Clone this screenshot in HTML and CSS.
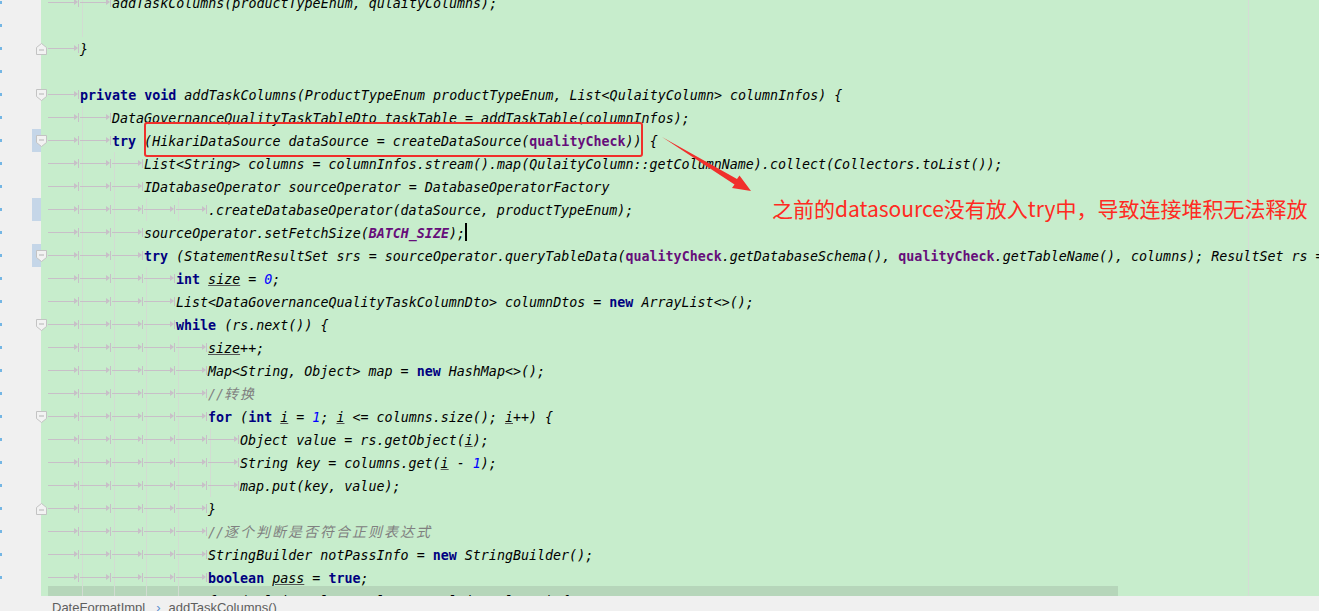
FILE: index.html
```html
<!DOCTYPE html>
<html lang="zh-CN">
<head>
    <meta charset="UTF-8">
    <title>DateFormatImpl - addTaskColumns()</title>
    <link rel="stylesheet" href="styles.css">
</head>
<body>

    <div class="editor">
        <div class="row gd"><span class="gut"></span><span class="code"><i class="t"></i><i class="t"></i>addTaskColumns(productTypeEnum, qulaityColumns);</span></div>
        <div class="row gd"><span class="gut"></span><span class="code"></span></div>
        <div class="row"><span class="gut"><svg class="fold" width="11" height="12" viewBox="0 0 11 12"><path d="M0.5 11.5H10.5V4.5L5.5 0.5L0.5 4.5Z"/><line x1="3" y1="7" x2="8" y2="7"/></svg></span><span class="code"><i class="t"></i>}</span></div>
        <div class="row"><span class="gut"></span><span class="code"></span></div>
        <div class="row"><span class="gut"><svg class="fold" width="11" height="12" viewBox="0 0 11 12"><path d="M0.5 0.5H10.5V7.5L5.5 11.5L0.5 7.5Z"/><line x1="3" y1="5" x2="8" y2="5"/></svg></span><span class="code"><i class="t"></i><b class="k">private</b> <b class="k">void</b> addTaskColumns(ProductTypeEnum productTypeEnum, List&lt;QulaityColumn&gt; columnInfos) {</span></div>
        <div class="row"><span class="gut"></span><span class="code"><i class="t"></i><i class="t"></i>DataGovernanceQualityTaskTableDto taskTable = addTaskTable(columnInfos);</span></div>
        <div class="row"><span class="gut"><span class="bm"></span><svg class="fold" width="11" height="12" viewBox="0 0 11 12"><path d="M0.5 0.5H10.5V7.5L5.5 11.5L0.5 7.5Z"/><line x1="3" y1="5" x2="8" y2="5"/></svg></span><span class="code"><i class="t"></i><i class="t"></i><b class="k">try</b> (HikariDataSource dataSource = createDataSource(<b class="f">qualityCheck</b>)) {</span></div>
        <div class="row"><span class="gut"></span><span class="code"><i class="t"></i><i class="t"></i><i class="t"></i>List&lt;String&gt; columns = columnInfos.stream().map(QulaityColumn::getColumnName).collect(Collectors.toList());</span></div>
        <div class="row"><span class="gut"></span><span class="code"><i class="t"></i><i class="t"></i><i class="t"></i>IDatabaseOperator sourceOperator = DatabaseOperatorFactory</span></div>
        <div class="row"><span class="gut"><span class="bm"></span></span><span class="code"><i class="t"></i><i class="t"></i><i class="t"></i><i class="t"></i><i class="t"></i>.createDatabaseOperator(dataSource, productTypeEnum);</span></div>
        <div class="row"><span class="gut"></span><span class="code"><i class="t"></i><i class="t"></i><i class="t"></i>sourceOperator.setFetchSize(<b class="c">BATCH_SIZE</b>);<span class="caret"></span></span></div>
        <div class="row"><span class="gut"><span class="bm"></span><svg class="fold" width="11" height="12" viewBox="0 0 11 12"><path d="M0.5 0.5H10.5V7.5L5.5 11.5L0.5 7.5Z"/><line x1="3" y1="5" x2="8" y2="5"/></svg></span><span class="code"><i class="t"></i><i class="t"></i><i class="t"></i><b class="k">try</b> (StatementResultSet srs = sourceOperator.queryTableData(<b class="f">qualityCheck</b>.getDatabaseSchema(), <b class="f">qualityCheck</b>.getTableName(), columns); ResultSet rs = srs.getResultSet()) {</span></div>
        <div class="row"><span class="gut"></span><span class="code"><i class="t"></i><i class="t"></i><i class="t"></i><i class="t"></i><b class="k">int</b> <u>size</u> = <span class="n">0</span>;</span></div>
        <div class="row"><span class="gut"></span><span class="code"><i class="t"></i><i class="t"></i><i class="t"></i><i class="t"></i>List&lt;DataGovernanceQualityTaskColumnDto&gt; columnDtos = <b class="k">new</b> ArrayList&lt;&gt;();</span></div>
        <div class="row"><span class="gut"><svg class="fold" width="11" height="12" viewBox="0 0 11 12"><path d="M0.5 0.5H10.5V7.5L5.5 11.5L0.5 7.5Z"/><line x1="3" y1="5" x2="8" y2="5"/></svg></span><span class="code"><i class="t"></i><i class="t"></i><i class="t"></i><i class="t"></i><b class="k">while</b> (rs.next()) {</span></div>
        <div class="row"><span class="gut"></span><span class="code"><i class="t"></i><i class="t"></i><i class="t"></i><i class="t"></i><i class="t"></i><u>size</u>++;</span></div>
        <div class="row"><span class="gut"></span><span class="code"><i class="t"></i><i class="t"></i><i class="t"></i><i class="t"></i><i class="t"></i>Map&lt;String, Object&gt; map = <b class="k">new</b> HashMap&lt;&gt;();</span></div>
        <div class="row"><span class="gut"></span><span class="code"><i class="t"></i><i class="t"></i><i class="t"></i><i class="t"></i><i class="t"></i><span class="m">//<span class="cj">转换</span></span></span></div>
        <div class="row"><span class="gut"><svg class="fold" width="11" height="12" viewBox="0 0 11 12"><path d="M0.5 0.5H10.5V7.5L5.5 11.5L0.5 7.5Z"/><line x1="3" y1="5" x2="8" y2="5"/></svg></span><span class="code"><i class="t"></i><i class="t"></i><i class="t"></i><i class="t"></i><i class="t"></i><b class="k">for</b> (<b class="k">int</b> <u>i</u> = <span class="n">1</span>; <u>i</u> &lt;= columns.size(); <u>i</u>++) {</span></div>
        <div class="row"><span class="gut"></span><span class="code"><i class="t"></i><i class="t"></i><i class="t"></i><i class="t"></i><i class="t"></i><i class="t"></i>Object value = rs.getObject(<u>i</u>);</span></div>
        <div class="row"><span class="gut"></span><span class="code"><i class="t"></i><i class="t"></i><i class="t"></i><i class="t"></i><i class="t"></i><i class="t"></i>String key = columns.get(<u>i</u> - <span class="n">1</span>);</span></div>
        <div class="row"><span class="gut"></span><span class="code"><i class="t"></i><i class="t"></i><i class="t"></i><i class="t"></i><i class="t"></i><i class="t"></i>map.put(key, value);</span></div>
        <div class="row"><span class="gut"><svg class="fold" width="11" height="12" viewBox="0 0 11 12"><path d="M0.5 11.5H10.5V4.5L5.5 0.5L0.5 4.5Z"/><line x1="3" y1="7" x2="8" y2="7"/></svg></span><span class="code"><i class="t"></i><i class="t"></i><i class="t"></i><i class="t"></i><i class="t"></i>}</span></div>
        <div class="row"><span class="gut"></span><span class="code"><i class="t"></i><i class="t"></i><i class="t"></i><i class="t"></i><i class="t"></i><span class="m">//<span class="cj">逐个判断是否符合正则表达式</span></span></span></div>
        <div class="row"><span class="gut"></span><span class="code"><i class="t"></i><i class="t"></i><i class="t"></i><i class="t"></i><i class="t"></i>StringBuilder notPassInfo = <b class="k">new</b> StringBuilder();</span></div>
        <div class="row"><span class="gut"></span><span class="code"><i class="t"></i><i class="t"></i><i class="t"></i><i class="t"></i><i class="t"></i><b class="k">boolean</b> <u>pass</u> = <b class="k">true</b>;</span></div>
        <div class="row"><span class="gut"></span><span class="code sel"><i class="t"></i><i class="t"></i><i class="t"></i><i class="t"></i><i class="t"></i>for (QulaityColumn column : qulaityColumns) {</span></div>

        <!-- 标注：红框 + 箭头 -->
        <svg class="marks" width="1319" height="596" viewBox="0 0 1319 596">
            <rect x="145" y="123" width="497" height="33" rx="2" fill="none" stroke="#f0302c" stroke-width="2"/>
            <polygon points="662,137 737,179 739.5,175.5 751,191 732,188 734.5,184.5" fill="#f0302c"/>
        </svg>
        <div class="note">之前的datasource没有放入try中，导致连接堆积无法释放</div>
    </div>

    <div class="crumbs">DateFormatImpl<span class="sep">›</span>addTaskColumns()</div>

</body>
</html>
```

FILE: styles.css
```css
body {
    margin: 0;
    height: 611px;
    overflow: hidden;
    background-color: #f0f0f0;
}
.editor {
    position: relative;
    height: 605px;
    margin-top: -9px;
    overflow: hidden;
    background: linear-gradient(90deg, #f0f0f0 0 41px, #c7edcc 41px 1248px, #d6dbd6 1248px 1249px, #c7edcc 1249px);
    font-family: "DejaVu Sans Mono", "Noto Sans CJK SC", monospace;
    font-size: 13.33px;
    color: #000;
}
.row {
    display: flex;
    height: 23px;
}
.row.gd {
    background: linear-gradient(#d2dcd2, #d2dcd2) 82px 0 / 1px 23px no-repeat;
}
.gut {
    position: relative;
    flex: 0 0 41px;
    display: flex;
    justify-content: flex-end;
    background: linear-gradient(#74b6e4, #74b6e4) 0 10px / 2px 3px no-repeat;
}
.bm {
    width: 9px;
    height: 23px;
    background-color: #c5d6e8;
}
.fold {
    position: absolute;
    left: 36px;
    top: 6px;
}
.fold path {
    fill: #f2f2f2;
    stroke: #c3c3c3;
}
.fold line {
    stroke: #b4b4b4;
}
.code {
    margin-left: 7px;
    line-height: 25px;
    white-space: pre;
    font-style: italic;
}
.code.sel {
    flex: none;
    width: 1070px;
    overflow: hidden;
    background-color: #b6d6ba;
    box-shadow: 0 -3px 0 #b6d6ba;
}
.t {
    display: inline-block;
    width: 32px;
    height: 23px;
    vertical-align: top;
    position: relative;
    background:
        linear-gradient(#c8bfc8, #c8bfc8) 0 11px / 27px 1px no-repeat,
        linear-gradient(#c8bfc8, #c8bfc8) 30px 7px / 1px 9px no-repeat;
}
.t + .t {
    background:
        linear-gradient(#c8bfc8, #c8bfc8) 0 11px / 27px 1px no-repeat,
        linear-gradient(#c8bfc8, #c8bfc8) 30px 7px / 1px 9px no-repeat,
        linear-gradient(#d2dcd2, #d2dcd2) 2px 0 / 1px 23px no-repeat;
}
.t::after {
    content: "";
    position: absolute;
    left: 26px;
    top: 8px;
    border-left: 4px solid #c8bfc8;
    border-top: 3.5px solid transparent;
    border-bottom: 3.5px solid transparent;
}
.k {
    font-style: normal;
    font-weight: bold;
    color: #000080;
}
.f {
    font-style: normal;
    font-weight: bold;
    color: #660e7a;
}
.c {
    font-weight: bold;
    color: #660e7a;
}
.n {
    color: #0000ff;
}
.m {
    color: #808080;
}
.cj {
    font-size: 14px;
    letter-spacing: 2px;
}
u {
    text-decoration-color: #555;
}
.caret {
    display: inline-block;
    height: 18px;
    border-left: 2px solid #000;
    vertical-align: -3px;
}
.marks {
    position: absolute;
    left: 0;
    top: 9px;
}
.note {
    position: absolute;
    left: 772px;
    top: 205px;
    font-family: "Noto Sans CJK SC", sans-serif;
    font-size: 21px;
    line-height: 24px;
    color: #ff2a22;
    white-space: nowrap;
}
.crumbs {
    height: 15px;
    box-sizing: border-box;
    padding: 3.5px 0 0 52px;
    overflow: hidden;
    font-family: "Liberation Sans", Arial, sans-serif;
    font-size: 13px;
    line-height: 16px;
    color: #5e5e5e;
    white-space: nowrap;
}
.sep {
    margin: 0 8px 0 11px;
    color: #5a8dcf;
}
```
